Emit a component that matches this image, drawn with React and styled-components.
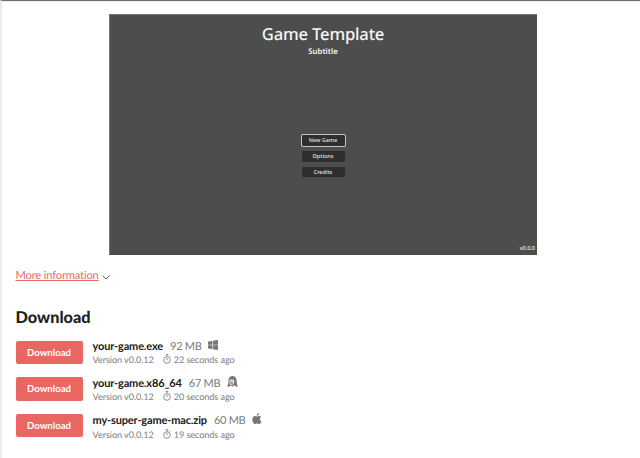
import React from "react";
import styled, { createGlobalStyle } from "styled-components";

const GlobalStyle = createGlobalStyle`
  * { box-sizing: border-box; }
  body {
    margin: 0;
    background: #fff;
    font-family: Lato, sans-serif;
    overflow: hidden;
    text-rendering: geometricPrecision;
    font-variant-ligatures: none;
  }
`;

const Page = styled.main`
  height: 458px;
  border-top: 1px solid #6f6f6f;
  border-left: 2px solid #ebebeb;
  box-shadow: inset 0 1px 0 #ececec;
  padding: 13px 0 0 13.5px;
  background: #fff;
  color: #202020;
`;

const GameFrame = styled.section`
  width: 428px;
  height: 241px;
  margin-left: 93.5px;
  background: #4d4d4d;
  border: 1px solid #777;
  border-width: 1px 0 0 1px;
  color: #f5f5f5;
  font-family: "Noto Sans", sans-serif;
  font-weight: 500;
  display: flex;
  flex-direction: column;
  align-items: center;
`;

const GameTitle = styled.h1`
  margin: 7px 1px 0 0;
  font-size: 16.6px;
  line-height: 24px;
  font-weight: 500;
  letter-spacing: -0.18px;
`;

const Subtitle = styled.div`
  margin-right: 1px;
  font-size: 7.8px;
  line-height: 12px;
  font-weight: 600;
`;

const Menu = styled.nav`
  display: flex;
  flex-direction: column;
  gap: 5px;
  margin-top: 77.3px;
  margin-right: 1px;
`;

const MenuButton = styled.button`
  width: 43px;
  height: 10.7px;
  padding: 0;
  border: 0;
  border-radius: 1px;
  background: #2f2f2f;
  color: #d8d8d8;
  font: 600 5.4px/10.7px "Noto Sans", sans-serif;
  text-rendering: inherit;
  box-shadow: ${(p) => (p.$focused ? "0 0 0 1px #c4c4c4" : "none")};
`;

const GameVersion = styled.div`
  align-self: flex-end;
  margin: auto 2px 3px 0;
  font-size: 5.5px;
  line-height: 8px;
`;

const MoreInfo = styled.div`
  display: flex;
  align-items: center;
  gap: 3px;
  height: 16px;
  margin-top: 13px;
  color: #606060;

  svg { margin-top: 3px; }
`;

const InfoLink = styled.a`
  color: #e96b67;
  font-size: 11.2px;
  line-height: 16px;
  letter-spacing: -0.19px;
  text-decoration: underline;
  text-decoration-thickness: 1px;
  text-underline-offset: 1px;
`;

const Heading = styled.h2`
  margin: 24px 0 13px;
  font-size: 16.3px;
  line-height: 20px;
  font-weight: 900;
`;

const UploadList = styled.div`
  display: flex;
  flex-direction: column;
  gap: 12.5px;
`;

const UploadRow = styled.div`
  display: flex;
  gap: 10px;
  height: 24px;
`;

const DownloadButton = styled.button`
  width: 67px;
  height: 23.5px;
  flex: none;
  margin-top: -0.4px;
  padding: 2px 0 0;
  border: 0;
  border-radius: 2px;
  background: #e96763;
  color: #fff;
  font: 700 9.6px/21.5px Lato, sans-serif;
  text-rendering: inherit;
`;

const Details = styled.div`
  display: flex;
  flex-direction: column;
  margin-top: -1.1px;
`;

const FileLine = styled.div`
  display: flex;
  align-items: center;
  height: 15px;
  font-size: 11px;
  white-space: nowrap;
`;

const FileName = styled.strong`
  font-weight: 700;
  letter-spacing: -0.15px;
`;

const FileSize = styled.span`
  margin: 0 7px;
  color: #7b7b7b;
  letter-spacing: -0.3px;
`;

const MetaLine = styled.div`
  display: flex;
  align-items: center;
  height: 14px;
  margin-top: 0.6px;
  color: #7d7d7d;
  font-size: 9.1px;
  letter-spacing: -0.06px;
  white-space: nowrap;

  svg { margin: 0 3px 1px 9px; }
`;

const PlatformIcon = styled.svg`
  display: block;
  fill: #777;
  margin-bottom: 3px;
`;

const Chevron = () => (
  <svg width="8" height="5" viewBox="0 0 8 5" fill="none" stroke="currentColor" strokeWidth="1">
    <path d="M.5.6 4 4 7.5.6" />
  </svg>
);

const Stopwatch = () => (
  <svg width="8" height="10" viewBox="0 0 8 10" fill="none" stroke="currentColor" strokeWidth=".85">
    <circle cx="4" cy="6" r="3.3" />
    <path d="M2.6.6h2.8M4 .6v2M4 4v2.2M6.6 2.2l.7.7" />
  </svg>
);

const Windows = () => (
  <PlatformIcon width="10" height="10" viewBox="0 0 10 10">
    <path d="M0 1.4 4 .9v3.8H0zM4.6.8 10 0v4.7H4.6zM0 5.3h4v3.8l-4-.5zM4.6 5.3H10V10l-5.4-.8z" />
  </PlatformIcon>
);

const Penguin = () => (
  <PlatformIcon width="11" height="11" viewBox="0 0 11 11">
    <path
      fillRule="evenodd"
      d="M0 10.5C1.2 9 1.4 7 1.5 4.6 1.6 1.7 3.1.1 5.5.1s4 1.6 4.1 4.3c.1 2.4.3 4 1.4 6.1H8.5L7.8 9 6 10.5 3.6 9.6l-1 .9zM2.6 4.2l-.2 3.9 1.8.9 2.7-.9.3-3.6-1-1.2-1.5.8-1.2-.8z"
    />
    <path d="M3 4.1h1v1H3zM5.2 4.1h1v1h-1zM2.5 5.8l1.9-.5 2.1.7v1.7l-1.9.7-2-.7z" opacity=".65" />
  </PlatformIcon>
);

const Apple = () => (
  <PlatformIcon width="10" height="12" viewBox="0 0 10 12">
    <path d="M7 .1c.1 1.3-.9 2.5-2.2 2.6C4.7 1.5 5.8.3 7 .1zM9 4c-1.8 1.1-1.5 3.4.4 4.2-.5 1.4-1.4 2.9-2.4 2.9-.8 0-1-.5-1.9-.5s-1.2.5-1.9.5C1.8 11.1.3 8.6.3 6.5c0-2.2 1.4-3.4 2.7-3.4.9 0 1.5.5 2.1.5S6.4 3 7.3 3c.7 0 1.3.4 1.7 1z" />
  </PlatformIcon>
);

const uploads = [
  { name: "your-game.exe", size: "92 MB", age: 22, Icon: Windows },
  { name: "your-game.x86_64", size: "67 MB", age: 20, Icon: Penguin },
  { name: "my-super-game-mac.zip", size: "60 MB", age: 19, Icon: Apple },
];

export default function App() {
  return (
    <>
      <GlobalStyle />
      <Page>
        <GameFrame>
          <GameTitle>Game Template</GameTitle>
          <Subtitle>Subtitle</Subtitle>
          <Menu>
            <MenuButton $focused>New Game</MenuButton>
            <MenuButton>Options</MenuButton>
            <MenuButton>Credits</MenuButton>
          </Menu>
          <GameVersion>v0.0.0</GameVersion>
        </GameFrame>
        <MoreInfo>
          <InfoLink>More information</InfoLink>
          <Chevron />
        </MoreInfo>
        <Heading>Download</Heading>
        <UploadList>
          {uploads.map(({ name, size, age, Icon }) => (
            <UploadRow key={name}>
              <DownloadButton>Download</DownloadButton>
              <Details>
                <FileLine>
                  <FileName>{name}</FileName>
                  <FileSize>{size}</FileSize>
                  <Icon />
                </FileLine>
                <MetaLine>
                  <span>Version v0.0.12</span>
                  <Stopwatch />
                  <span>{age} seconds ago</span>
                </MetaLine>
              </Details>
            </UploadRow>
          ))}
        </UploadList>
      </Page>
    </>
  );
}
